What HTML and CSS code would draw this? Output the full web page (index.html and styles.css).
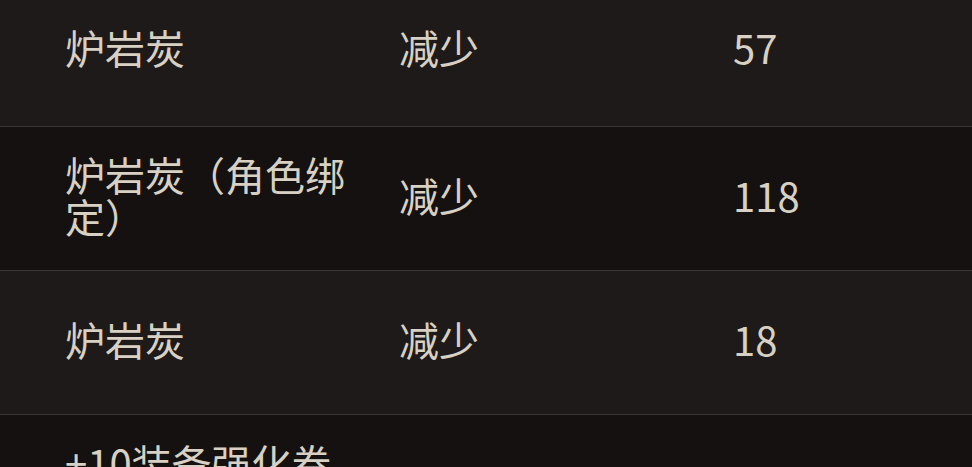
FILE: index.html
```html
<!DOCTYPE html>
<html lang="zh-CN">
<head>
<meta charset="utf-8">
<link rel="stylesheet" href="styles.css">
</head>
<body>
<div class="table">
  <div class="row odd first">
    <div class="cell">炉岩炭</div>
    <div class="cell">减少</div>
    <div class="cell num">57</div>
  </div>
  <div class="row even">
    <div class="cell">炉岩炭（角色绑定）</div>
    <div class="cell">减少</div>
    <div class="cell num">118</div>
  </div>
  <div class="row odd">
    <div class="cell">炉岩炭</div>
    <div class="cell">减少</div>
    <div class="cell num">18</div>
  </div>
  <div class="row even">
    <div class="cell">+10装备强化卷轴</div>
    <div class="cell"></div>
    <div class="cell num"></div>
  </div>
</div>
</body>
</html>
```

FILE: styles.css
```css
html, body {
  margin: 0;
  padding: 0;
  background: #151211;
}
body {
  width: 972px;
  height: 467px;
  overflow: hidden;
  font-family: "Noto Sans CJK SC", "Noto Sans", sans-serif;
  color: #d8d1c3;
}
.table {
  display: flex;
  flex-direction: column;
}
.row {
  display: grid;
  grid-template-columns: 290px 290px 1fr;
  column-gap: 44px;
  padding: 0 0 8px 65px;
  height: 144px;
  box-sizing: border-box;
  align-items: center;
  border-bottom: 1px solid #3a3532;
  font-size: 40px;
  line-height: 42px;
}
.row.first {
  height: 127px;
  padding-bottom: 33px;
}
.odd {
  background: #1e1a19;
}
.even {
  background: #141110;
}
.cell {
  word-break: break-all;
}
```
